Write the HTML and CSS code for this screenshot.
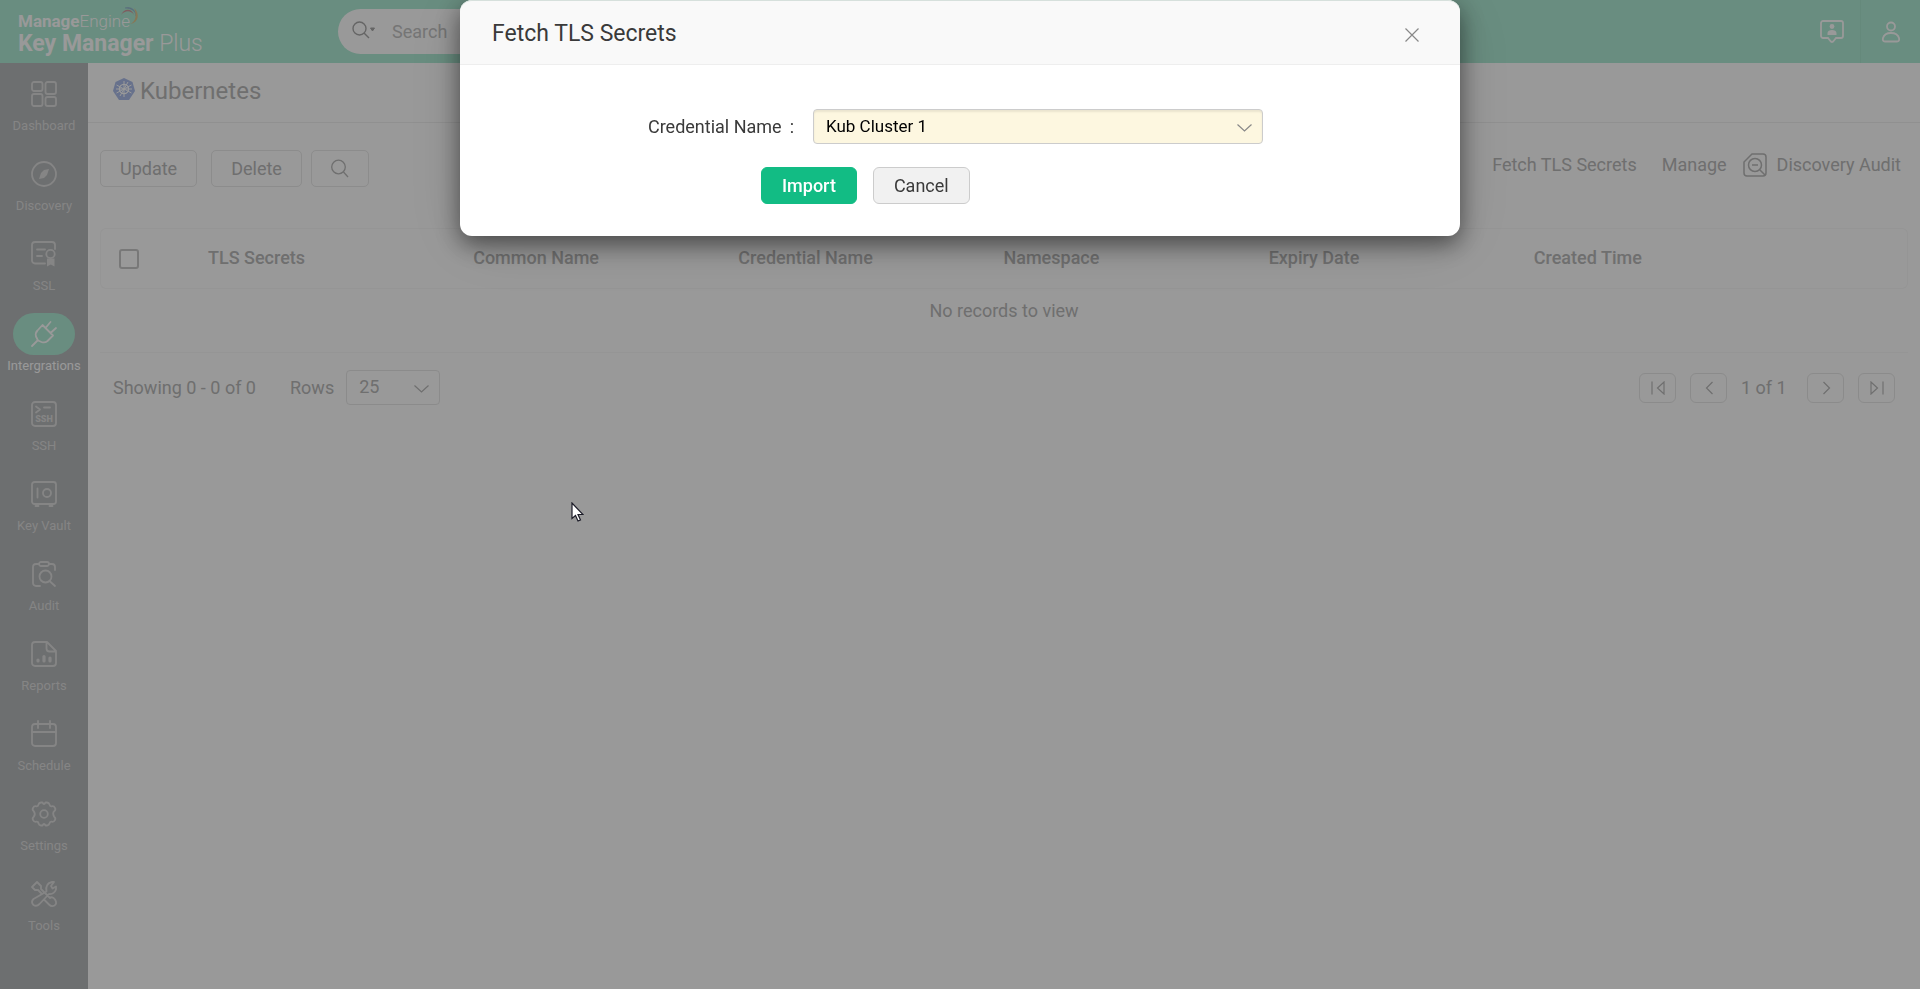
FILE: index.html
```
<!DOCTYPE html>
<html lang="en">
<head>
<meta charset="utf-8">
<meta name="viewport" content="width=device-width, initial-scale=1">
<title>Key Manager Plus - Kubernetes</title>
<link rel="stylesheet" href="styles.css">
</head>
<body>
<div class="app">
  <header class="topbar">
    <a class="brand" href="#">
      <span class="brand-company"><b>Manage</b>Engine<svg class="swoosh" viewBox="0 0 20 20"><path d="M1 9C4 2 12 2 14 9 11 4 5 4 1 9z" fill="#d29a9e"/><path d="M5 2c6-2 11 2 11 8 0-5-5-8-11-8z" fill="#93b3cf" stroke="#93b3cf" stroke-width=".5"/><path d="M14 2c6 5 5 15-4 16 6-2 7-10 4-16z" fill="#e0c78f"/></svg></span>
      <span class="brand-product"><b>Key Manager</b> Plus</span>
    </a>
    <div class="search">
      <svg class="search-icon" viewBox="0 0 24 18" fill="none" stroke="currentColor" stroke-width="1.400"><circle cx="7.500" cy="7.500" r="6.500"/><path d="M12 12l5 5"/><path d="M18.500 7h4l-2 3z" fill="currentColor" stroke-width="1"/></svg>
      <input class="search-input" type="search" placeholder="Search" aria-label="Search">
    </div>
    <div class="top-actions">
      <button class="top-button" aria-label="Support"><svg width="24" height="24" viewBox="0 0 24 24" fill="none" stroke="currentColor" stroke-width="1.800"><path d="M3 1h18a2 2 0 0 1 2 2v13a2 2 0 0 1-2 2h-5l-2 2.500q-2 3-4 0L8 18H3a2 2 0 0 1-2-2V3a2 2 0 0 1 2-2z"/><circle cx="12" cy="6.500" r="2.400" fill="currentColor" stroke="none"/><path d="M7.500 15v-2c0-2 2-3 4.500-3s4.500 1 4.500 3v2z" fill="currentColor" stroke="none"/></svg></button>
      <button class="top-button profile" aria-label="Profile"><svg width="20" height="22" viewBox="0 0 20 22" fill="none" stroke="currentColor" stroke-width="1.800"><circle cx="10" cy="5.500" r="4"/><path d="M4 20.500h12c2 0 2.500-1.500 2-3.500-1-3.500-4.500-5-8-5s-7 1.500-8 5c-.5 2 0 3.500 2 3.500z"/></svg></button>
    </div>
  </header>

  <div class="body">
    <nav class="sidebar" aria-label="Main">
      <a class="nav-item" href="#"><span class="nav-pill"><svg class="nav-icon" viewBox="0 0 26 26"><rect x="1" y="1" width="10.500" height="9" rx="2"/><rect x="14.500" y="1" width="10.500" height="12" rx="2"/><rect x="1" y="13" width="10.500" height="12" rx="2"/><rect x="14.500" y="16" width="10.500" height="9" rx="2"/></svg></span>Dashboard</a>
      <a class="nav-item" href="#"><span class="nav-pill"><svg class="nav-icon" viewBox="0 0 26 26"><circle cx="13" cy="13" r="12"/><path class="solid" d="M18 8l-2 6-3 3-5 1 2-6 3-3z"/></svg></span>Discovery</a>
      <a class="nav-item" href="#"><span class="nav-pill"><svg class="nav-icon" viewBox="0 0 26 26"><path d="M14 22.500H4a3 3 0 0 1-3-3V4a3 3 0 0 1 3-3h17a3 3 0 0 1 3 3v4M6 8.500h8M6 15h5"/><circle cx="19.500" cy="13" r="4.200"/><path class="solid" d="M16 17.500h7.500v8l-3.700-2-3.800 2z"/></svg></span>SSL</a>
      <a class="nav-item active" href="#"><span class="nav-pill"><svg class="nav-icon" viewBox="0 0 26 26"><path d="M1 25l5.500-5.500M11.500 4l10.500 10.500-5.500 5.500a6 6 0 0 1-6 1l-3.500-1.500-2-4a6 6 0 0 1 1.500-6zM14.500 7l5-6M19.500 12l5.500-5"/></svg></span>Intergrations</a>
      <a class="nav-item" href="#"><span class="nav-pill"><svg class="nav-icon" viewBox="0 0 26 26"><rect x="1" y="1" width="24" height="24" rx="3"/><path d="M5 5.500l4 3-4 3M13 6.500h6"/><text class="ssh-text" x="13" y="21" text-anchor="middle">SSH</text></svg></span>SSH</a>
      <a class="nav-item" href="#"><span class="nav-pill"><svg class="nav-icon" viewBox="0 0 26 26"><rect x="1" y="1" width="24" height="22" rx="2.500"/><circle cx="16" cy="12" r="4"/><path d="M6.500 7.500v9M4.500 25h3M18.500 25h3"/></svg></span>Key Vault</a>
      <a class="nav-item" href="#"><span class="nav-pill"><svg class="nav-icon" viewBox="0 0 26 26"><path d="M9 25H5a3 3 0 0 1-3-3V6a3 3 0 0 1 3-3h3M18 3h3a3 3 0 0 1 3 3v3M18.500 20l5.500 5"/><rect x="8" y="1" width="10" height="4" rx="2"/><circle cx="14.500" cy="15.500" r="6"/></svg></span>Audit</a>
      <a class="nav-item" href="#"><span class="nav-pill"><svg class="nav-icon" viewBox="0 0 26 26"><path d="M4 1h12l9 9v12a3 3 0 0 1-3 3H4a3 3 0 0 1-3-3V4a3 3 0 0 1 3-3zM15.500 1v6.500a3 3 0 0 0 3 3H25"/><path class="bars" d="M7 19v1M13 15.500V20M19 17v3"/></svg></span>Reports</a>
      <a class="nav-item" href="#"><span class="nav-pill"><svg class="nav-icon" viewBox="0 0 26 26"><rect x="1" y="3" width="24" height="22" rx="3"/><path d="M1 11h24M7 0v7M19 0v7"/></svg></span>Schedule</a>
      <a class="nav-item" href="#"><span class="nav-pill"><svg class="nav-icon" viewBox="0 0 26 26"><circle cx="13" cy="13" r="3.800"/><path d="M10 1.500h1.500q1.500 3 3 0H16q2 .2 2.500 2 .2 2 2.200 1.800 2.300-.5 3.300 1.700 1 2-.8 3.200-2 2 0 5.600 1.800 1.200.8 3.200-1 2.200-3.300 1.700-2-.2-2.200 1.800-.5 1.800-2.500 2h-1.500q-1.500-3-3 0H10q-2-.2-2.500-2-.2-2-2.200-1.800Q3 21.200 2 19q-1-2 .8-3.200 2-2.800 0-5.600Q1 9 2 7q1-2.200 3.300-1.700 2 .2 2.200-1.800.5-1.800 2.500-2z"/></svg></span>Settings</a>
      <a class="nav-item" href="#"><span class="nav-pill"><svg class="nav-icon" viewBox="0 0 26 26"><path d="M1 6l5-5 4 4v3l9 9M6 9H4L1 6M7 9l4 4M19 17q2-2 5 1.500 2.500 4-.5 6-3 1.500-5.500-1L13 18.500M15.500 10.500q-1.500-8 5.500-9.500h2l-3 4 1.500 2.500 3.500-2v3q-2 5-7 4.500L8.500 23q-3 3-6 1-3-3 0-6z"/></svg></span>Tools</a>
    </nav>

    <main class="content">
      <div class="page-head">
        <svg class="kube" viewBox="0 0 22 22"><path d="M11 0l8.500 4L22 13l-6 9H6L0 13 2.500 4z" fill="#acbde9"/><g fill="none" stroke="#fff"><circle cx="11" cy="11" r="4.600" stroke-width="1.300"/><path d="M11 3v16M3.500 7l15 8M18.500 7l-15 8M7 18l8-14M3 11h16"/></g></svg>
        <h1 class="page-title">Kubernetes</h1>
      </div>

      <div class="toolbar">
        <button class="tool-button">Update</button>
        <button class="tool-button gap-small">Delete</button>
        <button class="tool-button" aria-label="Search table"><svg width="18" height="20" viewBox="0 0 18 20" fill="none" stroke="currentColor" stroke-width="1.300"><circle cx="7.500" cy="8" r="6.800"/><path d="M12.500 13l4.500 5"/></svg></button>
        <div class="links">
          <a href="#">Fetch TLS Secrets</a>
          <a href="#">Manage</a>
          <a class="audit-link" href="#"><svg width="24" height="24" viewBox="0 0 24 24" fill="none" stroke="currentColor" stroke-width="1.500"><path d="M9 1h11a3 3 0 0 1 3 3v16a3 3 0 0 1-3 3H4a3 3 0 0 1-3-3V9zM17 17l5 5M9 12h6"/><circle cx="12" cy="12" r="6.500"/></svg>Discovery Audit</a>
        </div>
      </div>

      <table class="records">
        <thead>
          <tr>
            <th class="check-cell"><input class="check" type="checkbox" aria-label="Select all"></th>
            <th>TLS Secrets</th><th>Common Name</th><th>Credential Name</th><th>Namespace</th><th>Expiry Date</th><th>Created Time</th><th class="end-cell"></th>
          </tr>
        </thead>
        <tbody><tr><td colspan="8">No records to view</td></tr></tbody>
      </table>

      <div class="pager">
        <span>Showing 0 - 0 of 0</span>
        <label class="rows-label" for="rows">Rows</label>
        <span class="select-wrap rows-wrap">
          <select class="select" id="rows"><option>25</option></select>
          <svg class="chevron" viewBox="0 0 15 8"><path d="M.5.5l7 6.500 7-6.500"/></svg>
        </span>
        <div class="pages">
          <button class="page-button" aria-label="First page"><svg class="page-icon" viewBox="0 0 14 14"><path d="M1 .5v13M13 1v12L6.500 7z"/></svg></button>
          <button class="page-button" aria-label="Previous page"><svg class="page-icon" viewBox="0 0 14 14"><path d="M10.500 1l-6 6 6 6"/></svg></button>
          <span class="page-count">1 of 1</span>
          <button class="page-button" aria-label="Next page"><svg class="page-icon" viewBox="0 0 14 14"><path d="M4.500 1l6 6-6 6"/></svg></button>
          <button class="page-button" aria-label="Last page"><svg class="page-icon" viewBox="0 0 14 14"><path d="M13 .5v13M1 1v12l6.500-6z"/></svg></button>
        </div>
      </div>
    </main>
  </div>
</div>

<div class="backdrop">
  <section class="dialog" role="dialog" aria-modal="true" aria-labelledby="dialog-title">
    <div class="dialog-head">
      <h2 class="dialog-title" id="dialog-title">Fetch TLS Secrets</h2>
      <button class="close" aria-label="Close"><svg width="14" height="14" viewBox="0 0 14 14" fill="none" stroke="currentColor" stroke-width="1.200"><path d="M.5.5l13 13M13.500.5l-13 13"/></svg></button>
    </div>
    <form class="dialog-body">
      <div class="field">
        <label class="field-label" for="credential"><span>Credential Name</span><span>:</span></label>
        <span class="select-wrap credential-wrap">
          <select class="select credential" id="credential"><option>Kub Cluster 1</option></select>
          <svg class="chevron" viewBox="0 0 15 8"><path d="M.5.5l7 6.500 7-6.500"/></svg>
        </span>
      </div>
      <div class="dialog-actions">
        <button class="dialog-button primary" type="button">Import</button>
        <button class="dialog-button" type="button">Cancel</button>
      </div>
    </form>
  </section>
  <svg class="pointer" viewBox="0 0 13 20"><path d="M1 1v15.500l3.500-3 2.500 5.500 2.500-1-2.500-5.500h5z" fill="#fff" stroke="#1c1c28" stroke-width="1.200"/></svg>
</div>
</body>
</html>
```
FILE: styles.css
```
* { box-sizing: border-box; }

body {
  margin: 0;
  background: #fff;
  color: #b9b9b9;
  font: 18px/24px Roboto, "Liberation Sans", sans-serif;
}

a { color: inherit; text-decoration: none; }
h1, h2 { margin: 0; font-weight: 400; }
svg { display: block; }

button, input, select { font: inherit; color: inherit; }
button { display: flex; align-items: center; justify-content: center; padding: 0; border: 0; background: none; }

.app { display: flex; flex-direction: column; min-height: 100vh; }

/* Top bar */
.topbar { display: flex; align-items: center; height: 63px; background: #afebd5; color: #fff; }
.brand { display: flex; flex-direction: column; width: 338px; padding: 2px 0 0 18px; }
.brand-company { display: flex; font-size: 17px; line-height: 22px; font-weight: 300; }
.brand-company b { font-weight: 700; }
.swoosh { width: 20px; height: 20px; margin: -4px 0 0 -10px; }
.brand-product { font-size: 23px; line-height: 24px; font-weight: 300; }
.brand-product b { font-weight: 700; }
.search { display: flex; align-items: center; gap: 16px; width: 400px; height: 45px; padding: 0 14px; border-radius: 23px; background: #fff; }
.search-icon { width: 24px; height: 18px; margin-bottom: 4px; color: #a9a9a9; }
.search-input { flex: 1; min-width: 0; padding: 0; border: 0; outline: 0; background: none; }
.search-input::placeholder { color: #c4c4c4; opacity: 1; }
.top-actions { display: flex; align-self: stretch; margin-left: auto; }
.top-button { width: 57px; }
.profile { width: 60px; border-left: 1px solid #a9e4ce; }

/* Side navigation */
.body { display: flex; flex: 1; }
.sidebar { display: flex; flex-direction: column; gap: 17px; width: 88px; padding-top: 10px; background: #b6b9bb; color: #dedede; }
.nav-item { display: flex; flex-direction: column; align-items: center; gap: 1px; font-size: 13px; line-height: 20px; }
.nav-pill { display: flex; align-items: center; justify-content: center; width: 62px; height: 42px; border-radius: 21px; }
.active { color: #fff; }
.active .nav-pill { background: #afebd5; }
.nav-icon { width: 26px; height: 26px; overflow: visible; fill: none; stroke: currentColor; stroke-width: 1.8; stroke-linecap: round; stroke-linejoin: round; }
.nav-icon .solid { fill: currentColor; stroke: none; }
.nav-icon .bars { stroke-width: 3.2; }
.ssh-text { fill: currentColor; stroke: none; font-size: 9px; font-weight: 900; }

/* Page */
.content { flex: 1; min-width: 0; }
.page-head { display: flex; align-items: center; gap: 5px; height: 60px; padding: 0 25px 4px; border-bottom: 1px solid #f0f0f0; }
.kube { width: 22px; height: 22px; margin-bottom: 4px; }
.page-title { font-size: 24px; line-height: 32px; }
.toolbar { display: flex; align-items: center; gap: 14px; margin: 27px 19px 41px 12px; }
.tool-button { height: 37px; padding: 0 19px; border: 1px solid #eaeaea; border-radius: 5px; }
.tool-button.gap-small { margin-right: -5px; }
.links { display: flex; align-items: center; gap: 25px; margin: 0 0 8px auto; }
.audit-link { display: flex; align-items: center; gap: 10px; margin-left: -9px; }

.records { width: calc(100% - 24px); margin: 0 12px; border-collapse: separate; border-spacing: 0; table-layout: fixed; }
.records th { height: 61px; padding: 0 0 2px 8px; border: solid #f8f8f8; border-width: 1px 0; text-align: left; font-weight: 500; }
.records th:first-child { border-left-width: 1px; border-radius: 6px 0 0 6px; }
.records th.end-cell { width: 117px; border-right-width: 1px; border-radius: 0 6px 6px 0; }
.records th.check-cell { width: 100px; padding: 0 0 0 18px; }
.check { display: block; width: 20px; height: 20px; margin: 0; border: 2px solid #c9c9c9; border-radius: 3px; appearance: none; }
.records td { height: 64px; padding: 0 0 20px; border-bottom: 1px solid #f8f8f8; text-align: center; }

.pager { display: flex; align-items: center; margin: 17px 25px 0 25px; }
.rows-label { margin: 0 12px 0 34px; }
.select-wrap { position: relative; display: block; }
.select { display: block; width: 100%; height: 35px; padding: 0 12px 2px; border: 1px solid #e8e8e8; border-radius: 4px; outline: 0; background: none; appearance: none; }
.rows-wrap { width: 94px; }
.chevron { position: absolute; top: 15px; right: 11px; width: 15px; height: 8px; overflow: visible; fill: none; stroke: currentColor; stroke-width: 1.2; pointer-events: none; }
.pages { display: flex; align-items: center; gap: 14px; margin-left: auto; }
.page-button { width: 37px; height: 30px; border: 1px solid #e8e8e8; border-radius: 6px; }
.page-icon { width: 14px; height: 14px; fill: none; stroke: currentColor; stroke-width: 1.2; }
.page-count { width: 52px; }

/* Dialog */
.backdrop { position: fixed; inset: 0; padding: 0 24px; background: rgba(0, 0, 0, 0.4); }
.dialog { max-width: 1000px; margin: 0 auto; border-radius: 12px; background: #fff; color: #3a3a3a; box-shadow: 0 8px 24px rgba(0, 0, 0, 0.5), 0 8px 64px rgba(0, 0, 0, 0.12); }
.dialog-head { display: flex; align-items: center; justify-content: space-between; height: 65px; padding: 2px 41px 0 32px; border-top: 1px solid #d6e0dc; border-bottom: 1px solid #eee; border-radius: 12px 12px 0 0; background: #f9f9f9; }
.dialog-title { font-size: 23px; line-height: 32px; }
.close { width: 14px; height: 24px; padding-top: 2px; color: #888; }
.dialog-body { display: flex; flex-direction: column; gap: 23px; padding: 44px 30px 32px; }
.field { display: flex; align-items: center; }
.field-label { display: flex; justify-content: flex-end; gap: 8px; width: 304px; margin-right: 19px; }
.credential-wrap { width: 450px; }
.credential { border-color: #ccc; background: #fdf7e0; color: #000; font-size: 17px; box-shadow: inset 0 2px 2px rgba(0, 0, 0, 0.08); }
.credential-wrap .chevron { color: #888; }
.dialog-actions { display: flex; gap: 16px; padding-left: 271px; }
.dialog-button { height: 37px; padding: 0 20px; border: 1px solid #ccc; border-radius: 6px; background: #f1f1f1; }
.primary { border-color: #12bc84; background: #12bc84; color: #fff; font-weight: 500; }

.pointer { position: absolute; left: 571px; top: 502px; width: 13px; height: 20px; }
```
